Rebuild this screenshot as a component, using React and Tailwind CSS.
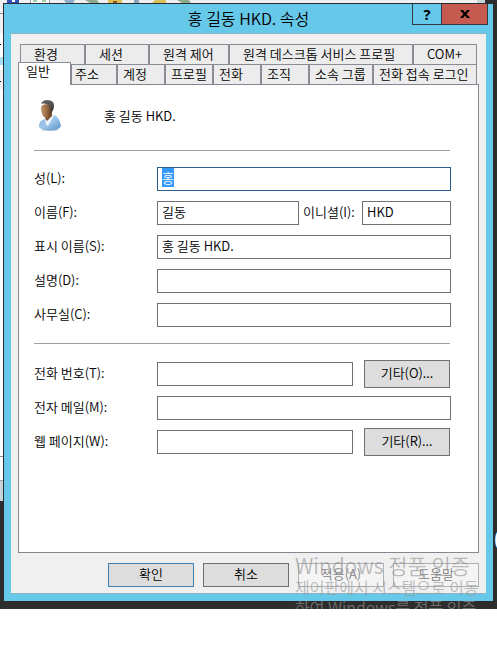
import React from "react";

const font = "font-['Noto_Sans_CJK_KR',sans-serif] font-[350]";
const inputShape =
  "h-6 min-w-0 rounded-none border bg-white px-1 pb-1 text-[13px] leading-4 text-black outline-none selection:bg-[#3399ff] selection:text-white";
const inputBase = `${inputShape} border-[#707070]`;
const smallButton =
  "h-7 w-[86px] shrink-0 border border-[#707070] bg-[#dddddd] pb-[2px] text-center leading-5";
const footButton = "h-6 w-[86px] shrink-0 border pb-[2px] text-center leading-5";

function BackTab({ children, pad }) {
  return (
    <button
      role="tab"
      aria-selected="false"
      className={`border-t border-r border-l border-[#898c95] bg-[#ececec] pb-[2px] text-left leading-4 whitespace-nowrap ${pad}`}
    >
      {children}
    </button>
  );
}

function Row({ id, label, children }) {
  return (
    <div className="flex h-6 items-center">
      <label htmlFor={id} className="w-[123px] shrink-0 pb-[2px] leading-5">
        {label}
      </label>
      <div className="flex min-w-0 flex-1 items-center">{children}</div>
    </div>
  );
}

function UserIcon() {
  return (
    <svg width="24" height="34" viewBox="0 0 24 34" aria-hidden="true">
      <defs>
        <linearGradient id="face" x1="0" x2="1">
          <stop offset="0" stopColor="#c4986c" />
          <stop offset="0.5" stopColor="#9a6c42" />
          <stop offset="1" stopColor="#5c3a22" />
        </linearGradient>
        <linearGradient id="shirt" x1="0" y1="0" x2="1" y2="1">
          <stop offset="0" stopColor="#8db9e2" />
          <stop offset="0.5" stopColor="#9cc5ea" />
          <stop offset="1" stopColor="#5a90c6" />
        </linearGradient>
        <linearGradient id="hair" x1="0" y1="0" x2="0" y2="1">
          <stop offset="0" stopColor="#63666a" />
          <stop offset="1" stopColor="#33302e" />
        </linearGradient>
      </defs>
      <ellipse cx="12" cy="31" rx="9" ry="1" fill="#d5d5d5" />
      <path d="M1 28C1 23 3 21 7 20L15 16C20 17 22 21 23 27C21 33 4 33 1 28Z" fill="url(#shirt)" />
      <path d="M7 19L9 21L14 15L16 17L10 27C8 26 7 23 7 19Z" fill="#eef4fa" />
      <path d="M7 15L14 12V17L9 22L7 19Z" fill="#7c5030" />
      <path d="M3 9C3 4 14 4 14 10C14 15 12 19 9 19C5 19 3 14 3 9Z" fill="url(#face)" />
      <path d="M3 5C4 0 12 0 15 3C17 6 16 10 14 13C12 12 13 9 11 6C8 5 5 4 3 5Z" fill="url(#hair)" />
    </svg>
  );
}

function BackWindow() {
  return (
    <div className="absolute inset-x-0 top-0 bottom-[108px] mr-3 bg-[#c5d3da]" aria-hidden="true">
      <div className="absolute inset-x-0 top-0 bottom-5 mr-2 border-b border-[#a0a0a0] bg-white">
        <div className="absolute inset-x-0 top-0 h-[90px] bg-[#f0f0f0]" />
        <div className="absolute inset-x-0 bottom-[23px] h-px bg-[#8c8c8c]" />
        <div className="absolute top-[13px] left-0 h-px w-[3px] bg-[#888]" />
        <div className="absolute top-[34px] left-0 h-9 w-[3px] bg-white" />
        <div className="absolute top-[57px] left-0 h-2 w-[3px] bg-[#a8dcf2]" />
        <div className="absolute top-11 left-0 h-px w-px bg-black" />
        <div className="absolute top-[81px] left-0 h-px w-px bg-black" />
        <svg className="absolute top-0 left-0" width="200" height="3">
          <path d="M7 0h12v3H7z" fill="#3350b8" />
          <path d="M12 0h3v2h-3z" fill="#fff" />
          <path d="M30.500 0v3M49.500 0v3" stroke="#999" />
          <path d="M31 0h18v3H31z" fill="#fff" />
          <path d="M33 1h4M42 1h4" stroke="#4a9a4a" />
          <path d="M64 0h11l-2 3h-7z" fill="#8fadc9" />
          <path d="M85 0h12l2 3H90z" fill="#8bab8c" />
          <path d="M108 0h14v3h-14z" fill="#e1bd58" />
          <path d="M113 1h4v2h-4z" fill="#805f1c" />
          <path d="M134 0h5v3h-5z" fill="#8ba7bd" />
          <path d="M155 0h11v3h-14z" fill="#d9c35a" />
          <path d="M177 0h12l2 3h-9z" fill="#8bab8c" />
        </svg>
      </div>
    </div>
  );
}

export default function App() {
  return (
    <main className={`relative overflow-hidden bg-[#2d2d2d] pt-[3px] pr-1 pb-2 pl-[3px] text-[13px] text-black ${font}`}>
      <BackWindow />
      <div className="absolute top-[520px] -right-3 text-[28px] leading-9 text-white" aria-hidden="true">
        0
      </div>

      <section
        role="dialog"
        aria-labelledby="title"
        className="relative border-t border-l border-[#2b2b33] bg-[#66c9ea] pr-[7px] pb-[7px] pl-[7px]"
      >
        <header className="relative flex h-[29px] items-center justify-center">
          <h1 id="title" className="pb-[2px] text-[16px] leading-6 font-[350]">
            홍 길동 HKD. 속성
          </h1>
          <div className="absolute top-0 -right-[2px] flex h-[21px] border-x border-b border-[#2f3a40]">
            <button aria-label="도움말" className="flex w-7 items-center justify-center font-['Open_Sans',sans-serif] text-[15px] leading-4 font-bold">
              ?
            </button>
            <button aria-label="닫기" className="flex w-[46px] items-center justify-center border-l border-[#2f3a40] bg-[#c45a50]">
              <svg width="10" height="8" viewBox="0 0 10 8">
                <path d="M0 0H3L5 2.500L7 0H10L6.500 4L10 8H7L5 5.500L3 8H0L3.500 4Z" fill="#000" />
              </svg>
            </button>
          </div>
        </header>

        <div className="border-y border-[#8fb3c2] bg-[#f0f0f0] px-[7px] pt-[10px] pb-[6px]">
          <div role="tablist" className="mr-[2px] ml-[2px]">
            <div className="grid h-5 grid-cols-[65fr_64fr_80fr_184fr_64fr]">
              <BackTab pad="pl-[13px]">환경</BackTab>
              <BackTab pad="pl-[13px]">세션</BackTab>
              <BackTab pad="pl-[13px]">원격 제어</BackTab>
              <BackTab pad="pl-[13px]">원격 데스크톱 서비스 프로필</BackTab>
              <BackTab pad="pl-[13px]">COM+</BackTab>
            </div>
            <div className="grid h-5 grid-cols-[51fr_46fr_48fr_48fr_48fr_48fr_64fr_104fr]">
              <button
                role="tab"
                aria-selected="true"
                className="relative z-10 -mt-[2px] -mb-px -ml-[2px] border-t border-r border-l border-[#898c95] bg-white pb-[6px] pl-[7px] text-left leading-4"
              >
                일반
              </button>
              <BackTab pad="pl-[3px]">주소</BackTab>
              <BackTab pad="pl-[5px]">계정</BackTab>
              <BackTab pad="pl-[5px]">프로필</BackTab>
              <BackTab pad="pl-[5px]">전화</BackTab>
              <BackTab pad="pl-[5px]">조직</BackTab>
              <BackTab pad="pl-[5px]">소속 그룹</BackTab>
              <BackTab pad="pl-[5px]">전화 접속 로그인</BackTab>
            </div>
          </div>

          <div role="tabpanel" className="border border-[#828790] bg-white pt-[13px] pr-7 pb-[98px] pl-[15px]">
            <div className="flex h-[35px] items-center gap-[42px] pl-1">
              <UserIcon />
              <span className="leading-5">홍 길동 HKD.</span>
            </div>
            <hr className="mt-[17px] border-[#a0a0a0]" />

            <div className="-mr-px mt-4 flex flex-col gap-[10px]">
              <Row id="last" label="성(L):">
                <input
                  id="last"
                  autoFocus
                  onFocus={(e) => e.target.select()}
                  defaultValue="홍"
                  className={`${inputShape} flex-1 border-[#2b5f8f]`}
                />
              </Row>
              <Row id="first" label="이름(F):">
                <input id="first" defaultValue="길동" className={`${inputBase} flex-1`} />
                <label htmlFor="initials" className="w-[63px] shrink-0 pb-[2px] pl-1 leading-5 whitespace-nowrap">
                  이니셜(I):
                </label>
                <input id="initials" defaultValue="HKD" className={`${inputBase} w-[89px] shrink-0`} />
              </Row>
              <Row id="display" label="표시 이름(S):">
                <input id="display" defaultValue="홍 길동 HKD." className={`${inputBase} flex-1`} />
              </Row>
              <Row id="desc" label="설명(D):">
                <input id="desc" className={`${inputBase} flex-1`} />
              </Row>
              <Row id="office" label="사무실(C):">
                <input id="office" className={`${inputBase} flex-1`} />
              </Row>
            </div>

            <hr className="mt-4 border-[#a0a0a0]" />

            <div className="-mr-px mt-[18px] flex flex-col gap-[10px]">
              <Row id="phone" label="전화 번호(T):">
                <input id="phone" className={`${inputBase} mr-[11px] flex-1`} />
                <button className={`${smallButton} mr-px`}>기타(O)...</button>
              </Row>
              <Row id="mail" label="전자 메일(M):">
                <input id="mail" className={`${inputBase} flex-1`} />
              </Row>
              <Row id="web" label="웹 페이지(W):">
                <input id="web" className={`${inputBase} mr-[11px] flex-1`} />
                <button className={`${smallButton} mr-px`}>기타(R)...</button>
              </Row>
            </div>
          </div>

          <footer className="mt-[10px] flex justify-end gap-[9px]">
            <button className={`${footButton} border-[#3c7fb1] bg-[#dddddd]`}>확인</button>
            <button className={`${footButton} border-[#707070] bg-[#dddddd]`}>취소</button>
            <button disabled className={`${footButton} border-[#adb2b5] bg-[#f4f4f4] text-[#838383]`}>
              적용(A)
            </button>
            <button className={`${footButton} border-[#adb2b5] bg-[#f4f4f4] text-[#838383]`}>도움말</button>
          </footer>
        </div>
      </section>

      <div className="pointer-events-none absolute right-0 bottom-[-8px] w-[202px] whitespace-nowrap text-[#969696]/65">
        <p className="text-[21px] leading-6">Windows 정품 인증</p>
        <p className="text-[16px] leading-5">제어판에서 시스템으로 이동</p>
        <p className="text-[16px] leading-5">하여 Windows를 정품 인증</p>
      </div>
    </main>
  );
}
